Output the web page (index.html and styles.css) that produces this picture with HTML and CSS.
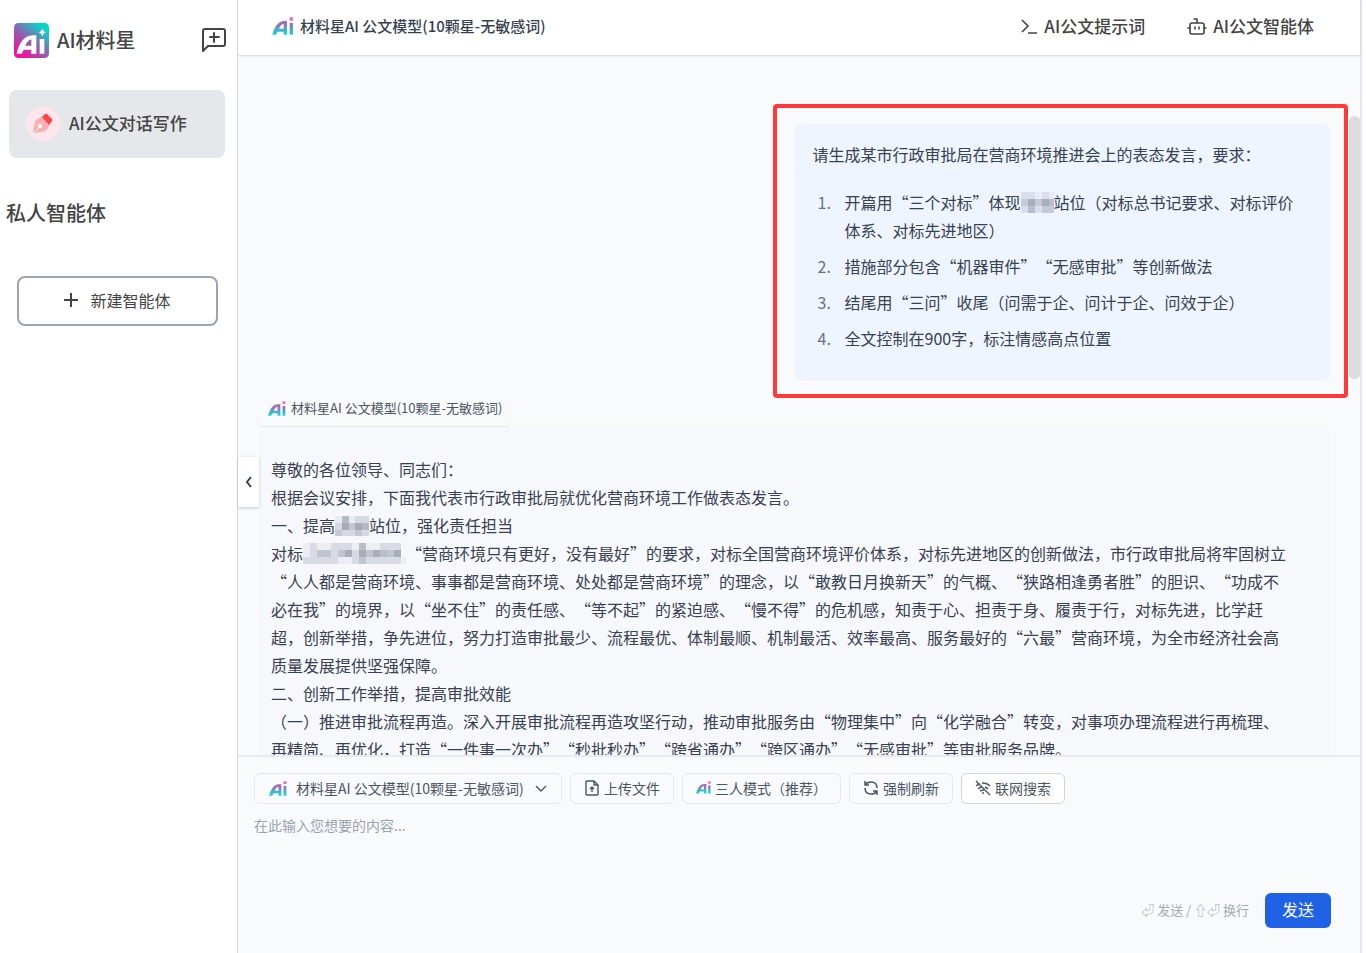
FILE: index.html
```html
<!DOCTYPE html>
<html lang="zh-CN">
<head>
  <meta charset="UTF-8" />
  <meta name="viewport" content="width=device-width, initial-scale=1.0"/>
  <title>AI材料星</title>
  <link rel="stylesheet" href="styles.css">
</head>
<body>

  <!-- shared logo mark -->
  <svg class="defs" width="0" height="0" aria-hidden="true">
    <defs>
      <linearGradient id="markFill" gradientUnits="userSpaceOnUse" x1="0" y1="10" x2="0" y2="54">
        <stop offset="0" stop-color="#c458b8"/>
        <stop offset="0.35" stop-color="#8a7cc4"/>
        <stop offset="0.85" stop-color="#18d2d2"/>
      </linearGradient>
      <symbol id="mark" viewBox="0 0 64 54">
        <path fill="url(#markFill)" fill-rule="evenodd" d="M0 53C6 32 16 12 36 12H44V53H34V44H16L11 53ZM20 35H34V21C27 22 23 28 20 35Z"/>
        <path fill="url(#markFill)" d="M52 18H62V53H52Z"/>
        <circle cx="57" cy="6" r="6" fill="#f46cc0"/>
      </symbol>
    </defs>
  </svg>

  <div class="app">
    <aside class="sidebar">
      <div class="brand">
        <svg class="brand-logo" viewBox="0 0 105 105" aria-hidden="true">
          <defs>
            <linearGradient id="brandFill" x1="0.1" y1="1" x2="0.9" y2="0">
              <stop offset="0.1" stop-color="#f50f9c"/>
              <stop offset="0.55" stop-color="#7a72b4"/>
              <stop offset="0.9" stop-color="#00d8c8"/>
            </linearGradient>
          </defs>
          <rect width="105" height="105" rx="13" fill="url(#brandFill)"/>
          <path fill="#fff" fill-rule="evenodd" d="M8 92C14 62 30 37 57 37H67V92H52V80H29L23 92ZM34 68H52V49C44 50 38 59 34 68Z"/>
          <path fill="#fff" d="M77 48H91V92H77ZM85 16Q87 26 97 28Q87 30 85 41Q83 30 73 28Q83 26 85 16Z"/>
        </svg>
        <span class="brand-name">AI材料星</span>
        <button class="icon-btn" aria-label="新建对话">
          <svg width="26" height="26" viewBox="0 0 26 26" fill="none" stroke="#444" stroke-width="2" stroke-linejoin="round" stroke-linecap="round">
            <path d="M2 24V4Q2 2 4 2H22Q24 2 24 4V17Q24 19 22 19H7Z"/>
            <path d="M13 6V15M9 10H18"/>
          </svg>
        </button>
      </div>

      <a href="#" class="nav-item">
        <span class="nav-icon">
          <svg width="22" height="22" viewBox="0 0 22 22" aria-hidden="true">
            <path fill="#fbb0b0" d="M2 20Q1 20 1 19L3 9Q3 7 5 6L11 3L18 10L16 15Q15 17 13 18L4 20Z"/>
            <path fill="#f9444a" d="M10 4L13 1Q14 0 15 1L20 6Q21 7 20 8L17 12Z"/>
            <path d="M2 20L8 14" stroke="#fff" stroke-width="1"/>
            <circle cx="8" cy="13" r="2" fill="#fff"/>
          </svg>
        </span>
        <span class="nav-label">AI公文对话写作</span>
      </a>

      <h2 class="side-title">私人智能体</h2>

      <button class="new-agent">
        <svg width="14" height="14" viewBox="0 0 14 14" stroke="#444" stroke-width="2" aria-hidden="true"><path d="M7 0V14M0 7H14"/></svg>
        新建智能体
      </button>
    </aside>

    <main class="main">
      <header class="topbar">
        <h1 class="topbar-title">
          <svg class="mark-lg" aria-hidden="true"><use href="#mark"/></svg>
          材料星AI 公文模型(10颗星-无敏感词)
        </h1>
        <nav class="topbar-nav">
          <a href="#">
            <svg width="18" height="18" viewBox="0 0 18 18" fill="none" stroke="#444" stroke-width="1.6" aria-hidden="true"><path d="M2 3L8 9L2 15M8 16H17"/></svg>
            AI公文提示词
          </a>
          <a href="#">
            <svg width="20" height="18" viewBox="0 0 20 18" fill="none" stroke="#444" stroke-width="1.6" stroke-linejoin="round" stroke-linecap="round" aria-hidden="true">
              <rect x="3" y="6" width="14" height="11" rx="2"/>
              <path d="M10 6V2H7M1 11H3M17 11H19M8 10V12M12 10V12"/>
            </svg>
            AI公文智能体
          </a>
        </nav>
      </header>

      <section class="chat">
        <div class="question">
          <p>请生成某市行政审批局在营商环境推进会上的表态发言，要求：</p>
          <ol>
            <li>开篇用“三个对标”体现<svg class="mosaic" width="33" height="21" viewBox="0 0 33 21" shape-rendering="crispEdges"><rect width="33" height="21" fill="#d9deea"/><path fill="#c3c9d6" d="M0 7H7V14H0ZM14 7H21V14H14ZM21 14H33V21H21Z"/><path fill="#a7adbb" d="M7 7H14V14H7ZM21 7H28V14H21Z"/><path fill="#b7bdca" d="M28 7H33V14H28ZM7 14H14V21H7Z"/><path fill="#e7edf8" d="M14 0H21V7H14ZM28 0H33V7H28Z"/></svg>站位（对标总书记要求、对标评价体系、对标先进地区）</li>
            <li>措施部分包含“机器审件”“无感审批”等创新做法</li>
            <li>结尾用“三问”收尾（问需于企、问计于企、问效于企）</li>
            <li>全文控制在900字，标注情感高点位置</li>
          </ol>
        </div>

        <div class="answer-tag">
          <svg class="mark-sm" aria-hidden="true"><use href="#mark"/></svg>
          材料星AI 公文模型(10颗星-无敏感词)
        </div>

        <article class="answer">
          <p>尊敬的各位领导、同志们：</p>
          <p>根据会议安排，下面我代表市行政审批局就优化营商环境工作做表态发言。</p>
          <p>一、提高<svg class="mosaic" width="34" height="20" viewBox="0 0 34 20" shape-rendering="crispEdges"><rect width="34" height="20" fill="#d6d9e1"/><path fill="#c4c8d1" d="M0 14H7V20H0ZM14 7H20V14H14ZM20 14H27V20H20Z"/><path fill="#a7abb7" d="M7 7H14V14H7ZM20 7H27V14H20Z"/><path fill="#b5b9c4" d="M27 7H34V14H27ZM7 0H14V7H7Z"/><path fill="#e9ebf2" d="M14 0H20V7H14ZM0 0H7V7H0Z"/></svg>站位，强化责任担当</p>
          <p>对标<svg class="mosaic" width="103" height="21" viewBox="0 0 103 21" shape-rendering="crispEdges"><rect width="98" height="21" fill="#d8dbe3"/><path fill="#eceef4" d="M0 0H7V14H0ZM14 0H28V7H14ZM49 0H56V7H49ZM63 0H77V7H63ZM98 14H103V21H98ZM35 14H49V21H35Z"/><path fill="#c1c5cf" d="M14 7H28V14H14ZM35 7H42V14H35ZM63 7H70V14H63ZM84 7H91V14H84ZM56 14H63V21H56Z"/><path fill="#a9adb9" d="M42 7H49V14H42ZM56 7H63V14H56ZM70 7H77V14H70ZM91 7H98V14H91Z"/><path fill="#b9bdc8" d="M77 7H84V14H77ZM56 0H63V7H56Z"/></svg>“营商环境只有更好，没有最好”的要求，对标全国营商环境评价体系，对标先进地区的创新做法，市行政审批局将牢固树立“人人都是营商环境、事事都是营商环境、处处都是营商环境”的理念，以“敢教日月换新天”的气概、“狭路相逢勇者胜”的胆识、“功成不必在我”的境界，以“坐不住”的责任感、“等不起”的紧迫感、“慢不得”的危机感，知责于心、担责于身、履责于行，对标先进，比学赶超，创新举措，争先进位，努力打造审批最少、流程最优、体制最顺、机制最活、效率最高、服务最好的“六最”营商环境，为全市经济社会高质量发展提供坚强保障。</p>
          <p>二、创新工作举措，提高审批效能</p>
          <p>（一）推进审批流程再造。深入开展审批流程再造攻坚行动，推动审批服务由“物理集中”向“化学融合”转变，对事项办理流程进行再梳理、再精简、再优化，打造“一件事一次办”“秒批秒办”“跨省通办”“跨区通办”“无感审批”等审批服务品牌。</p>
        </article>

        <div class="scroll-thumb"></div>
      </section>

      <button class="collapse" aria-label="收起侧栏">
        <svg width="8" height="12" viewBox="0 0 8 12" fill="none" stroke="#374151" stroke-width="2" aria-hidden="true"><path d="M6 1L2 6L6 11"/></svg>
      </button>

      <form class="composer">
        <div class="tools">
          <div class="model-select">
            <svg class="mark-sm" aria-hidden="true"><use href="#mark"/></svg>
            <select id="model" aria-label="模型">
              <option>材料星AI 公文模型(10颗星-无敏感词)</option>
            </select>
            <svg class="chevron" width="12" height="8" viewBox="0 0 12 8" fill="none" stroke="#4b5563" stroke-width="1.4" aria-hidden="true"><path d="M1 1L6 6L11 1"/></svg>
          </div>
          <button type="button" class="tool">
            <svg width="16" height="16" viewBox="0 0 16 16" fill="none" stroke="#4b5563" stroke-width="1.4" stroke-linejoin="round" aria-hidden="true">
              <path d="M3 1H10L14 5V14Q14 15 13 15H3Q2 15 2 14V2Q2 1 3 1ZM10 1V5H14M8 12V7M6 9L8 7L10 9"/>
            </svg>
            上传文件
          </button>
          <button type="button" class="tool">
            <svg class="mark-xs" aria-hidden="true"><use href="#mark"/></svg>
            三人模式（推荐）
          </button>
          <button type="button" class="tool">
            <svg width="16" height="16" viewBox="0 0 16 16" fill="none" stroke="#4b5563" stroke-width="1.5" aria-hidden="true">
              <path d="M2 1V5H6M2 5Q4 2 8 2Q14 2 14 8M14 15V11H10M14 11Q12 14 8 14Q2 14 2 8"/>
            </svg>
            强制刷新
          </button>
          <button type="button" class="tool tool-on">
            <svg width="16" height="16" viewBox="0 0 16 16" fill="none" stroke="#4b5563" stroke-width="1.4" aria-hidden="true">
              <path d="M1 1L15 15M1 6Q3 4 5 4M7 3Q12 3 15 6M3 9Q5 7 7 7M10 7Q12 8 13 9M5 11Q7 10 9 10"/>
              <circle cx="8" cy="13" r="1" fill="#4b5563" stroke="none"/>
            </svg>
            联网搜索
          </button>
        </div>
        <textarea aria-label="输入内容" placeholder="在此输入您想要的内容..."></textarea>
        <div class="send-row">
          <span class="hint">⏎ 发送 / ⇧⏎ 换行</span>
          <button type="submit" class="send">发送</button>
        </div>
      </form>
    </main>
  </div>

</body>
</html>
```
FILE: styles.css
```css
* {
  box-sizing: border-box;
}

body {
  margin: 0;
  font-family: "Noto Sans CJK SC", sans-serif;
  background: #fdfdfe;
  color: #374151;
  text-spacing-trim: space-all;
}

h1, h2, p {
  margin: 0;
}

a {
  color: inherit;
  text-decoration: none;
}

button, select, textarea {
  font-family: inherit;
  color: inherit;
  cursor: pointer;
}

.defs {
  position: absolute;
}

.app {
  display: flex;
  height: 100vh;
  margin-right: 4px;
  border-right: 2px solid #e5e7eb;
}

/* sidebar */
.sidebar {
  flex: 0 0 238px;
  background: #fff;
  border-right: 1px solid #d9dbe0;
  color: #444;
}

.brand {
  display: flex;
  align-items: center;
  gap: 8px;
  padding: 22px 10px 0 14px;
}

.brand-logo {
  width: 35px;
  height: 35px;
}

.brand-name {
  font-size: 20px;
  line-height: 36px;
  font-weight: 500;
}

.icon-btn {
  display: flex;
  margin-left: auto;
  padding: 0;
  border: none;
  background: none;
}

.nav-item {
  display: flex;
  align-items: center;
  gap: 9px;
  height: 68px;
  margin: 32px 12px 0 9px;
  padding: 0 17px;
  border-radius: 8px;
  background: #e5e7eb;
  font-size: 17px;
  font-weight: 500;
}

.nav-label {
  padding-bottom: 4px;
}

.nav-icon {
  display: flex;
  align-items: center;
  justify-content: center;
  width: 34px;
  height: 34px;
  border-radius: 50%;
  background: #ffe6ec;
}

.side-title {
  margin: 40px 6px 0;
  font-size: 20px;
  line-height: 30px;
  font-weight: 500;
}

.new-agent {
  display: flex;
  align-items: center;
  justify-content: center;
  gap: 12px;
  width: 201px;
  height: 50px;
  margin: 48px 0 0 17px;
  padding-bottom: 4px;
  border: 2px solid #9ca3b4;
  border-radius: 8px;
  background: #fff;
  font-size: 16px;
}

/* main column */
.main {
  position: relative;
  display: flex;
  flex: 1;
  flex-direction: column;
  min-width: 0;
  background: #f9fafc;
}

.topbar {
  display: flex;
  align-items: center;
  justify-content: space-between;
  flex: 0 0 55px;
  padding: 0 46px 4px 34px;
  background: #fff;
  box-shadow: 0 1px 2px rgba(0, 0, 0, 0.15);
}

.topbar-title {
  display: flex;
  align-items: center;
  gap: 6px;
  font-size: 15px;
  font-weight: 500;
}

.topbar-nav {
  display: flex;
  gap: 42px;
  color: #444;
  font-size: 17px;
  font-weight: 500;
}

.topbar-nav a {
  display: flex;
  align-items: center;
  gap: 6px;
}

.mark-lg {
  width: 22px;
  height: 18px;
}

.mark-sm {
  width: 18px;
  height: 15px;
}

.mark-xs {
  width: 15px;
  height: 13px;
}

.chat {
  position: relative;
  flex: 1;
  min-height: 0;
  overflow: hidden;
  padding: 69px 30px 0 21px;
  font-size: 16px;
  line-height: 28px;
}

.question {
  position: relative;
  width: 50%;
  margin-left: auto;
  padding: 16px 24px 27px 18px;
  border-radius: 8px;
  background: #eef5ff;
  box-shadow: 0 1px 2px rgba(0, 0, 0, 0.05);
}

/* red highlight round the question */
.question::after {
  content: "";
  position: absolute;
  inset: -20px -18px -19px -22px;
  border: 4px solid #ff3838;
  border-radius: 4px;
}

.question ol {
  margin: 20px 0 0;
  padding-left: 22px;
}

.question li {
  padding-left: 10px;
}

.question li + li {
  margin-top: 8px;
}

.question li::marker {
  color: #6b7280;
}

.mosaic {
  vertical-align: -4px;
}

.answer-tag {
  display: flex;
  align-items: center;
  gap: 5px;
  width: fit-content;
  height: 36px;
  margin-top: 11px;
  padding: 0 8px 0 9px;
  border-radius: 4px;
  font-size: 13px;
  color: #4b5563;
  background: #f9fafc;
  box-shadow: 0 1px 1px rgba(0, 0, 0, 0.08);
}

.answer {
  margin-top: 2px;
  padding: 27px 43px 27px 12px;
  border-radius: 8px;
  background: #f7f8fc;
}

.scroll-thumb {
  position: absolute;
  top: 61px;
  right: 0;
  width: 11px;
  height: 263px;
  border-radius: 6px;
  background: #dcdcdc;
}

.collapse {
  position: absolute;
  top: 457px;
  left: 0;
  display: flex;
  align-items: center;
  justify-content: center;
  width: 21px;
  height: 50px;
  padding: 0;
  border: none;
  background: #fff;
  box-shadow: 0 1px 3px rgba(0, 0, 0, 0.2);
}

/* input area */
.composer {
  display: flex;
  flex: 0 0 198px;
  flex-direction: column;
  padding: 16px 29px 25px 16px;
  border-top: 2px solid #e8eaee;
}

.tools {
  display: flex;
  gap: 8px;
  font-size: 14px;
  color: #4b5563;
}

.model-select,
.tool {
  display: flex;
  align-items: center;
  height: 31px;
  border: 1px solid #e5e7eb;
  border-radius: 6px;
  background: #f9fafc;
}

.model-select {
  position: relative;
  width: 308px;
  padding-left: 14px;
}

.model-select select {
  flex: 1;
  height: 29px;
  padding: 0 0 2px 9px;
  border: none;
  outline: none;
  background: none;
  appearance: none;
  font-size: 14px;
}

.chevron {
  position: absolute;
  right: 14px;
  pointer-events: none;
}

.tool {
  gap: 4px;
  padding: 0 13px 2px;
  font-size: 14px;
}

.tool-on {
  border-color: #d1d5db;
  background: #fff;
}

textarea {
  flex: 1;
  margin-top: 10px;
  padding: 0;
  border: none;
  outline: none;
  background: none;
  resize: none;
  font-size: 14px;
  line-height: 22px;
}

textarea::placeholder {
  color: #9ca3af;
}

.send-row {
  display: flex;
  align-items: center;
  justify-content: flex-end;
  gap: 16px;
}

.hint {
  padding-bottom: 2px;
  font-size: 13px;
  color: #a3a9b5;
}

.send {
  width: 66px;
  height: 35px;
  padding: 0 0 4px;
  border: none;
  border-radius: 6px;
  background: #1f62e6;
  color: #fff;
  font-size: 16px;
}
```
